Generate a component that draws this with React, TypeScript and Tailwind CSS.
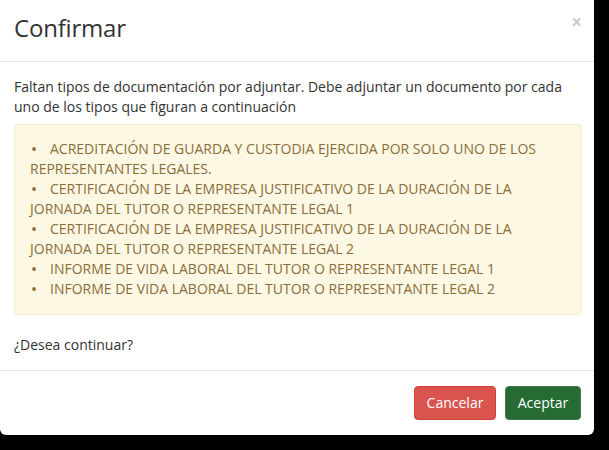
const items: string[] = [
  "ACREDITACIÓN DE GUARDA Y CUSTODIA EJERCIDA POR SOLO UNO DE LOS REPRESENTANTES LEGALES.",
  "CERTIFICACIÓN DE LA EMPRESA JUSTIFICATIVO DE LA DURACIÓN DE LA JORNADA DEL TUTOR O REPRESENTANTE LEGAL 1",
  "CERTIFICACIÓN DE LA EMPRESA JUSTIFICATIVO DE LA DURACIÓN DE LA JORNADA DEL TUTOR O REPRESENTANTE LEGAL 2",
  "INFORME DE VIDA LABORAL DEL TUTOR O REPRESENTANTE LEGAL 1",
  "INFORME DE VIDA LABORAL DEL TUTOR O REPRESENTANTE LEGAL 2",
];

export default function App() {
  return (
    <div className="w-[609px] h-[450px] bg-black overflow-hidden font-['Open_Sans',sans-serif] text-[14px] leading-[20px] text-[#333]">
      <div className="w-[594px] h-[435px] bg-white rounded-b-[6px] flex flex-col">
        <div className="h-[62px] border-b border-[#e5e5e5] pl-[14px] pr-[13px] pt-[15px] flex items-start justify-between">
          <h4 className="text-[24px] leading-[26px] text-[#333] tracking-[-0.2px]">Confirmar</h4>
          <button className="text-[19px] leading-[19px] font-bold text-black opacity-20 -mt-[2px] -mr-[1px]">×</button>
        </div>
        <div className="pl-[14px] pr-[12px] pt-[15px] pb-[15px]">
          <p className="mb-[7px]">
            Faltan tipos de documentación por adjuntar. Debe adjuntar un documento por cada uno de los tipos que figuran a continuación
          </p>
          <div className="border border-[#faebcc] bg-[#fcf8e3] text-[#8a6d3b] rounded-[4px] px-[15px] pt-[14px] pb-[15px] mb-[20px]">
            {items.map((item, i) => (
              <div key={i}>
                <span className="inline-block w-[20px] pl-[1px] text-[16px] leading-[20px] align-top">•</span>
                {item}
              </div>
            ))}
          </div>
          <p>¿Desea continuar?</p>
        </div>
        <div className="border-t border-[#e5e5e5] pt-[15px] pr-[13px] flex justify-end gap-[9px]">
          <button className="h-[34px] w-[82px] rounded-[4px] border border-[#d43f3a] bg-[#d9534f] text-white">
            Cancelar
          </button>
          <button className="h-[34px] w-[76px] rounded-[4px] border border-[#3f7d45] bg-[#256b33] text-white">
            Aceptar
          </button>
        </div>
      </div>
    </div>
  );
}
